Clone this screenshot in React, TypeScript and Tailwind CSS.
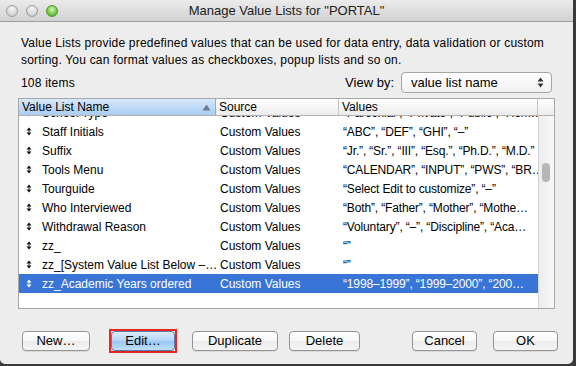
import React from "react";

const rows = [
  { name: "School Type", src: "Custom Values", vals: "“Parochial”, “Private”, “Public”, “Hom…" },
  { name: "Staff Initials", src: "Custom Values", vals: "“ABC”, “DEF”, “GHI”, “–”" },
  { name: "Suffix", src: "Custom Values", vals: "“Jr.”, “Sr.”, “III”, “Esq.”, “Ph.D.”, “M.D.”" },
  { name: "Tools Menu", src: "Custom Values", vals: "“CALENDAR”, “INPUT”, “PWS”, “BR…" },
  { name: "Tourguide", src: "Custom Values", vals: "“Select Edit to customize”, “–”" },
  { name: "Who Interviewed", src: "Custom Values", vals: "“Both”, “Father”, “Mother”, “Mothe…" },
  { name: "Withdrawal Reason", src: "Custom Values", vals: "“Voluntary”, “–”, “Discipline”, “Aca…" },
  { name: "zz_", src: "Custom Values", vals: "“”" },
  { name: "zz_[System Value List Below –…", src: "Custom Values", vals: "“”" },
  { name: "zz_Academic Years ordered", src: "Custom Values", vals: "“1998–1999”, “1999–2000”, “200…", sel: true },
];

function Handle({ white }: { white?: boolean }) {
  const c = white ? "#ffffff" : "#111111";
  return (
    <svg width="6" height="9" viewBox="0 0 6 9" className="shrink-0">
      <polygon points="0.5,3.5 3,0.5 5.5,3.5" fill={c} />
      <rect x="2.5" y="3.5" width="1" height="2" fill={c} />
      <polygon points="0.5,5.5 3,8.5 5.5,5.5" fill={c} />
    </svg>
  );
}

function Btn({ children, w, def }: { children: React.ReactNode; w: string; def?: boolean }) {
  return (
    <div
      className={
        "h-[20px] rounded-[4px] border flex items-center justify-center text-[13px] text-black shadow-[0_1px_0_rgba(0,0,0,0.08)] " +
        w +
        " " +
        (def
          ? "border-[#5b7fae] bg-[linear-gradient(to_bottom,#dcecfc_0%,#b6d8f8_45%,#98c7f3_55%,#bfe0fb_100%)]"
          : "border-[#959595] bg-[linear-gradient(to_bottom,#ffffff_0%,#f7f7f7_50%,#ececec_51%,#f4f4f4_100%)]")
      }
    >
      {children}
    </div>
  );
}

export default function App() {
  return (
    <div
      className="w-[576px] h-[366px] bg-[#3a3a3a] flex overflow-hidden"
      style={{ fontFamily: '"Liberation Sans", Arial, sans-serif' }}
    >
      <div className="w-[573px] h-[364px] bg-[#ededed] rounded-b-[5px] flex flex-col">
        {/* title bar */}
        <div className="h-[22px] shrink-0 bg-[linear-gradient(to_bottom,#ebebeb,#d2d2d2)] border-b border-[#9e9e9e] flex items-center relative">
          <div className="flex items-center pl-[6px] gap-[8px]">
            <div className="w-[12px] h-[12px] rounded-full border border-[#9c9c9c] bg-[radial-gradient(circle_at_50%_30%,#f4f4f4,#c6c6c6)]" />
            <div className="w-[12px] h-[12px] rounded-full border border-[#9c9c9c] bg-[radial-gradient(circle_at_50%_30%,#f4f4f4,#c6c6c6)]" />
            <div className="w-[12px] h-[12px] rounded-full border border-[#4e9a2e] bg-[radial-gradient(circle_at_50%_35%,#d5f7b8,#79cc4c_55%,#3f9d1c)]" />
          </div>
          <div className="absolute inset-0 flex items-center justify-center text-[13px] text-[#222] pointer-events-none">
            Manage Value Lists for "PORTAL"
          </div>
        </div>

        {/* description */}
        <div className="mt-[13px] ml-[21px] text-[12px] leading-[17px] tracking-[0.2px] text-black h-[34px]">
          Value Lists provide predefined values that can be used for data entry, data validation or custom
          <br />
          sorting. You can format values as checkboxes, popup lists and so on.
        </div>

        {/* count / view by */}
        <div className="mt-[3px] h-[21px] flex items-center text-[12px] text-black">
          <div className="ml-[21px] tracking-[0.2px]">108 items</div>
          <div className="ml-auto mr-[21px] flex items-center">
            <span className="text-[13px] mr-[7px]">View by:</span>
            <div className="w-[151px] h-[21px] rounded-[4px] border border-[#a5a5a5] bg-[linear-gradient(to_bottom,#ffffff,#f2f2f2)] flex items-center pl-[9px] pr-[7px] text-[13px]">
              <span>value list name</span>
              <svg width="7" height="11" viewBox="0 0 7 11" className="ml-auto">
                <polygon points="0.5,4.5 3.5,0.5 6.5,4.5" fill="#333" />
                <polygon points="0.5,6.5 3.5,10.5 6.5,6.5" fill="#333" />
              </svg>
            </div>
          </div>
        </div>

        {/* table */}
        <div className="mt-[5px] ml-[18px] w-[537px] h-[211px] border border-[#a8a8a8] bg-white flex flex-col">
          <div className="h-[17px] shrink-0 flex border-b border-[#b3b3b3] text-[12px] text-black">
            <div className="w-[197px] h-full bg-[linear-gradient(to_bottom,#d6e8fb,#a9cdf3)] flex items-center pl-[3px] border-r border-[#8fb0d6]">
              <span>Value List Name</span>
              <svg width="9" height="7" viewBox="0 0 9 7" className="ml-auto mr-[4px]">
                <polygon points="0.5,6.5 4.5,0.5 8.5,6.5" fill="#6c7c8c" />
              </svg>
            </div>
            <div className="w-[123px] h-full bg-[linear-gradient(to_bottom,#ffffff,#ececec)] flex items-center pl-[3px] border-r border-[#c6c6c6]">
              Source
            </div>
            <div className="w-[199px] h-full bg-[linear-gradient(to_bottom,#ffffff,#ececec)] flex items-center pl-[3px] border-r border-[#c6c6c6]">
              Values
            </div>
            <div className="flex-1 h-full bg-[linear-gradient(to_bottom,#ffffff,#ececec)]" />
          </div>
          <div className="flex-1 flex overflow-hidden">
            <div className="w-[519px] overflow-hidden">
              <div className="mt-[-13px]">
                {rows.map((r) => (
                  <div
                    key={r.name}
                    className={
                      "h-[19px] flex items-center text-[12px] whitespace-nowrap " +
                      (r.sel ? "bg-[#3875d7] text-white" : "text-black")
                    }
                  >
                    <div className="w-[197px] flex items-center pl-[7px] overflow-hidden">
                      <Handle white={r.sel} />
                      <span className="ml-[10px]">{r.name}</span>
                    </div>
                    <div className="w-[123px] pl-[4px] overflow-hidden">{r.src}</div>
                    <div className="w-[199px] pl-[4px] overflow-hidden tracking-[-0.15px]">{r.vals}</div>
                  </div>
                ))}
              </div>
            </div>
            <div className="flex-1 border-l border-[#d6d6d6] bg-[linear-gradient(to_right,#ececec,#f9f9f9)] relative">
              <div className="absolute left-[3px] top-[47px] w-[8px] h-[19px] rounded-full bg-[#b6b6b6]" />
            </div>
          </div>
        </div>

        {/* buttons */}
        <div className="mt-[20px] flex items-center">
          <div className="ml-[22px]">
            <Btn w="w-[68px]">New…</Btn>
          </div>
          <div className="ml-[19px] border-2 border-[#e8281e]">
            <Btn w="w-[64px]" def>
              Edit…
            </Btn>
          </div>
          <div className="ml-[15px]">
            <Btn w="w-[86px]">Duplicate</Btn>
          </div>
          <div className="ml-[11px]">
            <Btn w="w-[71px]">Delete</Btn>
          </div>
          <div className="ml-[52px]">
            <Btn w="w-[65px]">Cancel</Btn>
          </div>
          <div className="ml-[16px]">
            <Btn w="w-[65px]">OK</Btn>
          </div>
        </div>
      </div>
    </div>
  );
}
